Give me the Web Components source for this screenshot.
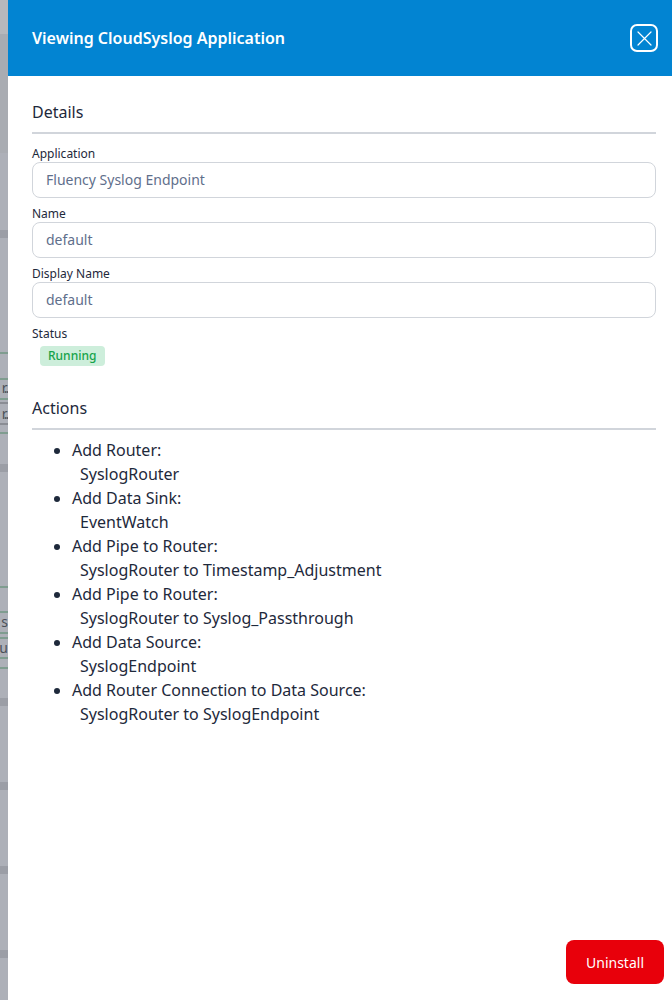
<!DOCTYPE html>
<html lang="en">
<head>
<meta charset="utf-8">
<title>Viewing CloudSyslog Application</title>
<style>
    html, body { margin: 0; height: 100%; }
    body {
        font-family: "Noto Sans", sans-serif;
        color: #1e293b;
        overflow: hidden;
    }
    app-shell { height: 1000px; }
</style>
</head>
<body>

<app-shell>
    <backdrop-strip slot="backdrop"></backdrop-strip>
    <app-header title="Viewing CloudSyslog Application"></app-header>
    <app-section heading="Details">
        <app-field label="Application" value="Fluency Syslog Endpoint"></app-field>
        <app-field label="Name" value="default"></app-field>
        <app-field label="Display Name" value="default"></app-field>
        <app-status label="Status" value="Running"></app-status>
    </app-section>
    <app-section heading="Actions" class="actions">
        <action-list>
            <action-item name="Add Router:" detail="SyslogRouter"></action-item>
            <action-item name="Add Data Sink:" detail="EventWatch"></action-item>
            <action-item name="Add Pipe to Router:" detail="SyslogRouter to Timestamp_Adjustment"></action-item>
            <action-item name="Add Pipe to Router:" detail="SyslogRouter to Syslog_Passthrough"></action-item>
            <action-item name="Add Data Source:" detail="SyslogEndpoint"></action-item>
            <action-item name="Add Router Connection to Data Source:" detail="SyslogRouter to SyslogEndpoint"></action-item>
        </action-list>
    </app-section>
    <app-button slot="footer">Uninstall</app-button>
</app-shell>

<script>
class AppShell extends HTMLElement {
    constructor() {
        super();
        this.attachShadow({ mode: "open" });
        this.shadowRoot.innerHTML = `
            <style>
                :host { display: flex; width: 672px; background: #adb0b8; }
                .drawer {
                    flex: 1;
                    min-width: 0;
                    background: #fff;
                    display: flex;
                    flex-direction: column;
                }
                .body { flex: 1; }
                .footer { display: flex; justify-content: flex-end; padding: 0 8px 16px 0; }
            </style>
            <slot name="backdrop"></slot>
            <div class="drawer">
                <div class="body"><slot></slot></div>
                <div class="footer"><slot name="footer"></slot></div>
            </div>
        `;
    }
}

// what shows of the page behind the drawer
class BackdropStrip extends HTMLElement {
    constructor() {
        super();
        this.attachShadow({ mode: "open" });
        const bands = [[34, 119, "#a9acb2"], [230, 8, "#9b9ea6"], [464, 8, "#9b9ea6"], [698, 8, "#9b9ea6"], [782, 8, "#9b9ea6"], [866, 8, "#9b9ea6"], [950, 8, "#9b9ea6"]];
        const lines = [[352, "#7f9d90"], [378, "#7f9d90"], [398, "#7f9d90"], [402, "#8a8d94"], [423, "#8a8d94"], [432, "#7f9d90"], [586, "#7f9d90"], [611, "#7f9d90"], [632, "#7f9d90"], [637, "#7f9d90"], [657, "#7f9d90"], [667, "#7f9d90"]];
        const texts = [[378, "r..", "tight"], [404, "r..", "tight"], [612, "s", ""], [638, "u", ""]];
        this.shadowRoot.innerHTML = `
            <style>
                :host {
                    display: block;
                    position: relative;
                    flex: none;
                    width: 8px;
                    overflow: hidden;
                    background: linear-gradient(#b7b8bc 0 34px, #adb0b8 34px);
                }
                div { position: absolute; left: 0; width: 8px; }
                span {
                    position: absolute;
                    right: 0;
                    font-size: 14px;
                    line-height: 20px;
                    color: #4b5058;
                    white-space: nowrap;
                }
                span.tight { letter-spacing: -1.6px; }
            </style>
            ${bands.map(b => `<div style="top:${b[0]}px;height:${b[1]}px;background:${b[2]}"></div>`).join("")}
            ${lines.map(l => `<div style="top:${l[0]}px;height:2px;background:${l[1]}"></div>`).join("")}
            ${texts.map(t => `<span class="${t[2]}" style="top:${t[0]}px">${t[1]}</span>`).join("")}
        `;
    }
}

class AppHeader extends HTMLElement {
    constructor() {
        super();
        this.attachShadow({ mode: "open" });
        this.shadowRoot.innerHTML = `
            <style>
                :host {
                    display: flex;
                    align-items: center;
                    justify-content: space-between;
                    height: 76px;
                    box-sizing: border-box;
                    padding: 0 14px 0 24px;
                    background: #0284d2;
                    color: #fff;
                }
                h1 { margin: 0; font-size: 16px; font-weight: 600; line-height: 24px; }
                button {
                    display: flex;
                    width: 28px;
                    height: 28px;
                    padding: 0;
                    background: none;
                    border: 2px solid #fff;
                    border-radius: 7px;
                    box-sizing: border-box;
                    align-items: center;
                    justify-content: center;
                }
            </style>
            <h1></h1>
            <button aria-label="Close">
                <svg width="15" height="15" viewBox="0 0 15 15" fill="none" stroke="#fff" stroke-width="1.2" stroke-linecap="round">
                    <path d="M1 1 14 14M14 1 1 14"/>
                </svg>
            </button>
        `;
    }
    connectedCallback() {
        this.shadowRoot.querySelector("h1").textContent = this.getAttribute("title") || "";
        this.removeAttribute("title");
    }
}

class AppSection extends HTMLElement {
    constructor() {
        super();
        this.attachShadow({ mode: "open" });
        this.shadowRoot.innerHTML = `
            <style>
                :host { display: block; padding: 24px 16px 0 24px; }
                :host(.actions) { padding-top: 30px; }
                :host(.actions) h2 { margin-bottom: 8px; }
                h2 {
                    margin: 0 0 12px;
                    padding-bottom: 8px;
                    font-size: 16px;
                    font-weight: 400;
                    line-height: 24px;
                    color: #1e293b;
                    border-bottom: 2px solid #d1d5db;
                }
            </style>
            <h2></h2>
            <slot></slot>
        `;
    }
    connectedCallback() {
        this.shadowRoot.querySelector("h2").textContent = this.getAttribute("heading") || "";
    }
}

class AppField extends HTMLElement {
    constructor() {
        super();
        this.attachShadow({ mode: "open" });
        this.shadowRoot.innerHTML = `
            <style>
                :host { display: block; margin-bottom: 8px; }
                label { display: block; font-size: 12px; line-height: 16px; color: #1e293b; }
                input {
                    display: block;
                    width: 100%;
                    height: 36px;
                    box-sizing: border-box;
                    padding: 0 13px 2px;
                    font: 14px "Noto Sans", sans-serif;
                    color: #5f6f8c;
                    background: #fff;
                    border: 1px solid #d1d5db;
                    border-radius: 8px;
                    outline: none;
                }
            </style>
            <label></label>
            <input readonly>
        `;
    }
    connectedCallback() {
        this.shadowRoot.querySelector("label").textContent = this.getAttribute("label") || "";
        this.shadowRoot.querySelector("input").value = this.getAttribute("value") || "";
        this.shadowRoot.querySelector("input").setAttribute("value", this.getAttribute("value") || "");
    }
}

class AppStatus extends HTMLElement {
    constructor() {
        super();
        this.attachShadow({ mode: "open" });
        this.shadowRoot.innerHTML = `
            <style>
                :host { display: block; }
                .label { font-size: 12px; line-height: 16px; color: #1e293b; }
                .badge {
                    display: inline-block;
                    margin: 4px 0 0 8px;
                    padding: 0 9px 0 8px;
                    font-size: 12px;
                    font-weight: 500;
                    line-height: 20px;
                    color: #16a34a;
                    background: #cdeedb;
                    border-radius: 4px;
                    vertical-align: top;
                }
            </style>
            <div class="label"></div>
            <div><span class="badge"></span></div>
        `;
    }
    connectedCallback() {
        this.shadowRoot.querySelector(".label").textContent = this.getAttribute("label") || "";
        this.shadowRoot.querySelector(".badge").textContent = this.getAttribute("value") || "";
    }
}

class ActionList extends HTMLElement {
    constructor() {
        super();
        this.attachShadow({ mode: "open" });
        this.shadowRoot.innerHTML = `
            <style>
                :host { display: block; padding-left: 40px; }
            </style>
            <slot></slot>
        `;
    }
}

class ActionItem extends HTMLElement {
    constructor() {
        super();
        this.attachShadow({ mode: "open" });
        this.shadowRoot.innerHTML = `
            <style>
                :host { display: list-item; list-style: disc; font-size: 16px; line-height: 24px; color: #1e293b; }
                .detail { padding-left: 8px; }
            </style>
            <div class="name"></div>
            <div class="detail"></div>
        `;
    }
    connectedCallback() {
        this.shadowRoot.querySelector(".name").textContent = this.getAttribute("name") || "";
        this.shadowRoot.querySelector(".detail").textContent = this.getAttribute("detail") || "";
    }
}

class AppButton extends HTMLElement {
    constructor() {
        super();
        this.attachShadow({ mode: "open" });
        this.shadowRoot.innerHTML = `
            <style>
                :host { display: block; }
                button {
                    display: block;
                    width: 98px;
                    height: 44px;
                    padding: 0;
                    font: 14px "Noto Sans", sans-serif;
                    color: #fff;
                    background: #e8000b;
                    border: none;
                    border-radius: 8px;
                }
            </style>
            <button><slot></slot></button>
        `;
    }
}

customElements.define("app-shell", AppShell);
customElements.define("backdrop-strip", BackdropStrip);
customElements.define("app-header", AppHeader);
customElements.define("app-section", AppSection);
customElements.define("app-field", AppField);
customElements.define("app-status", AppStatus);
customElements.define("action-list", ActionList);
customElements.define("action-item", ActionItem);
customElements.define("app-button", AppButton);
</script>
</body>
</html>
